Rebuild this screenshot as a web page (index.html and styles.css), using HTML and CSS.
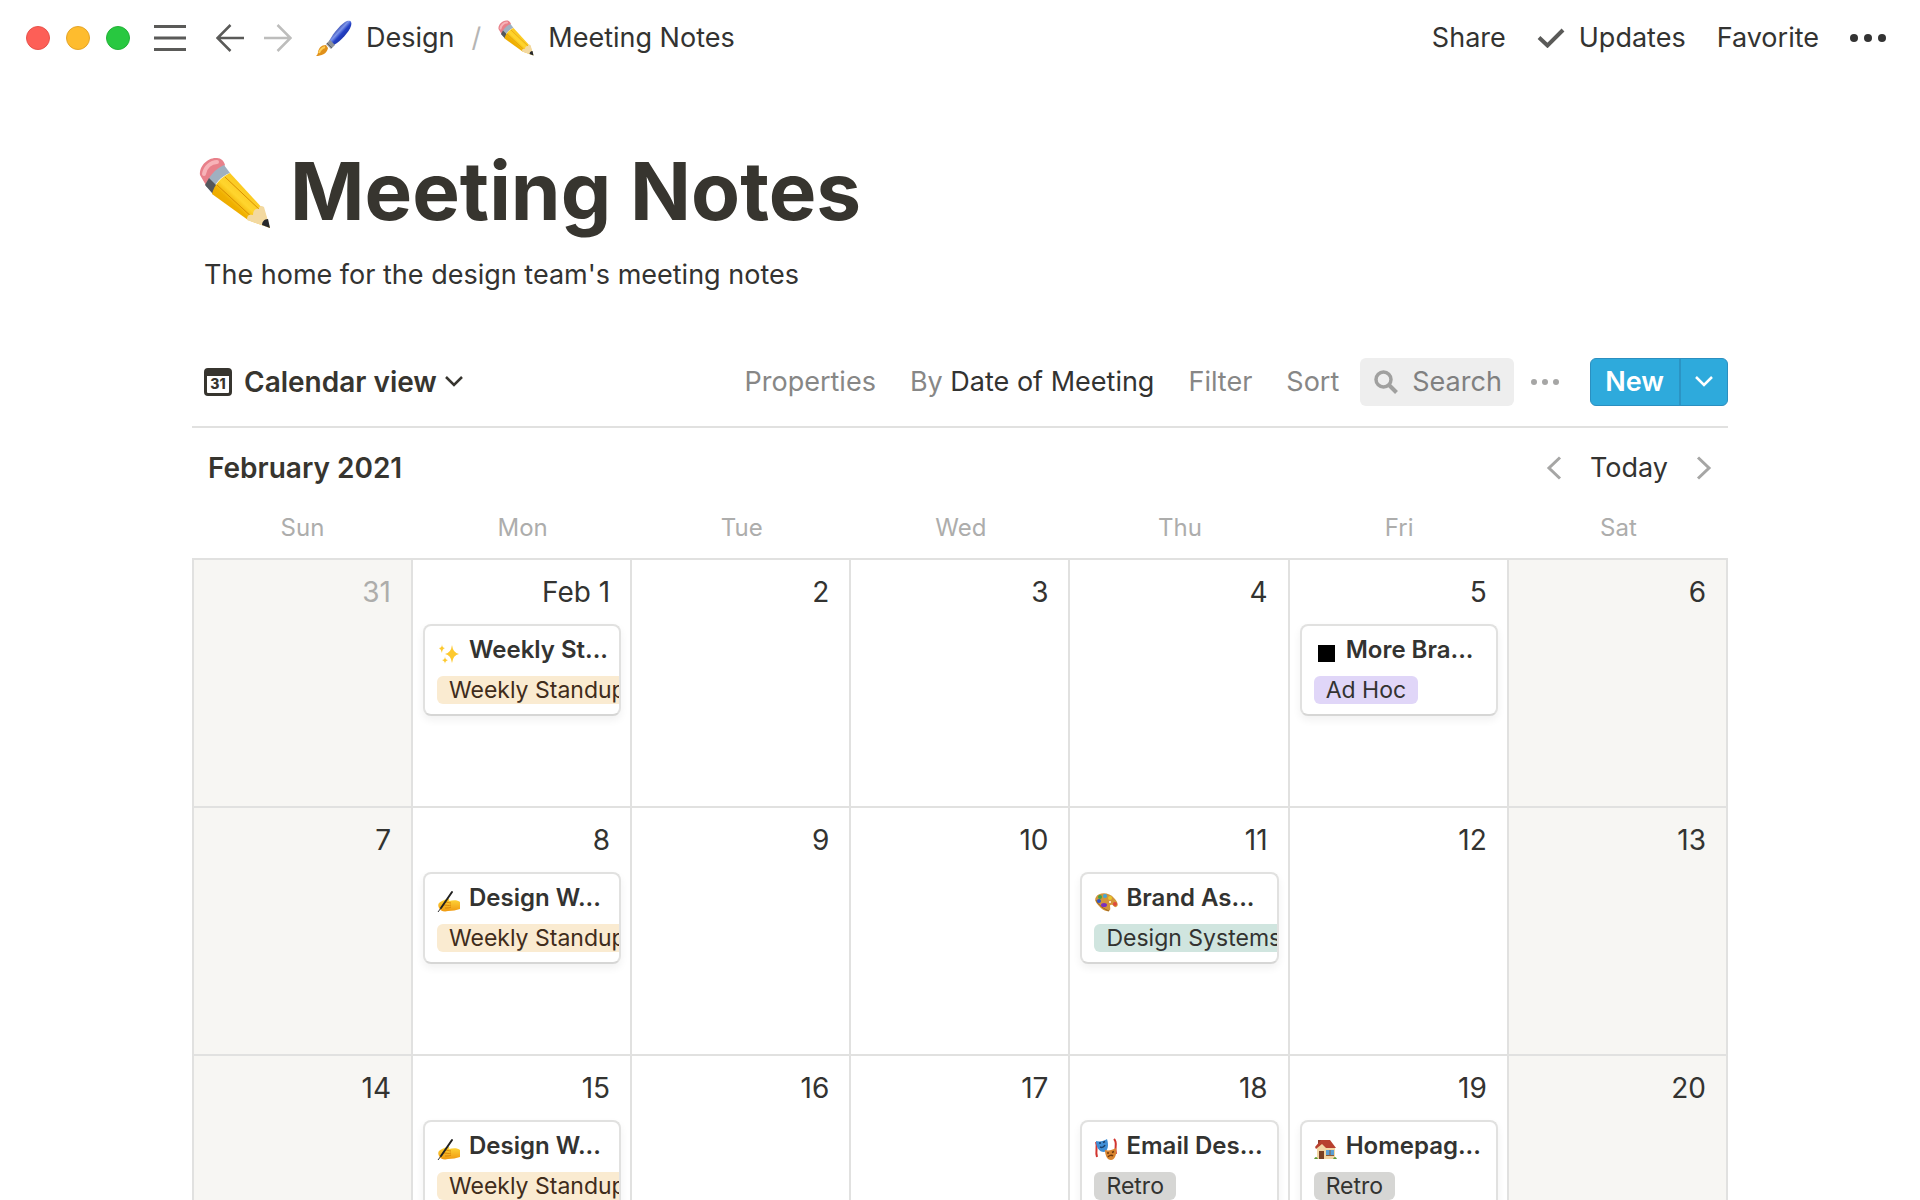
FILE: index.html
```html
<!DOCTYPE html>
<html lang="en">
<head>
    <meta charset="UTF-8">
    <meta name="viewport" content="width=device-width, initial-scale=1.0">
    <title>Meeting Notes</title>
    <link rel="stylesheet" href="styles.css">
</head>
<body>
    <!-- Shared icons -->
    <svg class="sprite" aria-hidden="true">
        <defs>
            <linearGradient id="wood" x1="0" y1="1" x2="1" y2="0">
                <stop offset="0" stop-color="#e09400"/>
                <stop offset="0.4" stop-color="#f0b000"/>
                <stop offset="0.5" stop-color="#ffd52e"/>
                <stop offset="1" stop-color="#f0ac00"/>
            </linearGradient>
            <linearGradient id="handle" x1="0" y1="0" x2="1" y2="1">
                <stop offset="0.3" stop-color="#22349c"/>
                <stop offset="0.45" stop-color="#7d95ea"/>
                <stop offset="0.55" stop-color="#2340c4"/>
                <stop offset="1" stop-color="#101a70"/>
            </linearGradient>
            <linearGradient id="skin" x1="0" y1="0" x2="0" y2="1">
                <stop offset="0" stop-color="#ffd93b"/>
                <stop offset="1" stop-color="#f09a12"/>
            </linearGradient>
        </defs>
        <symbol id="pencil" viewBox="0 0 72 72">
            <path d="M1 18C0 9 9 0 18 1c4 0 7 3 8 7L8 30z" fill="#e8808a"/>
            <path d="M5 17C6 10 12 5 18 5" stroke="#f7b3b8" stroke-width="4" fill="none" stroke-linecap="round"/>
            <path d="M7 29C9 20 16 12 25 8l6 8c-9 3-16 11-18 20z" fill="#9fb0c0"/>
            <path d="M6 28l4-7 8 8-4 8z" fill="#55575c"/>
            <path d="M13 37C15 28 22 20 31 16l34 37 6 18-22-8z" fill="url(#wood)"/>
            <path d="M18 28l37 34M26 20l36 34" stroke="#d98e00" stroke-width="1" fill="none"/>
            <path d="M48 63c0-5 2-6 6-5 0-5 3-7 6-6 0-3 2-4 5-2l6 21z" fill="#f3d9a0"/>
            <path d="M71 71l-8-3c0-3 2-6 6-6z" fill="#26282b"/>
        </symbol>
        <symbol id="hand" viewBox="0 0 24 24">
            <path d="M2 14c2-2 5-3 8-4 2-1 3 0 2 2 4-1 9-1 11 1v7c-4 1-7 2-12 2-4 1-8 0-9-3-1-2-1-4 0-5z" fill="url(#skin)"/>
            <path d="M8 13c3 0 4 1 6 1M7 16c3 0 5 1 7 0M8 19c3 0 4 0 6-1" stroke="#d98508" stroke-width="1" fill="none"/>
            <path d="M15 3L4 19" stroke="#222" stroke-width="2" stroke-linecap="round"/>
            <path d="M4 19L1 23" stroke="#333" stroke-width="1"/>
        </symbol>
    </svg>

    <header class="topbar">
        <div class="window-dots">
            <span class="dot red"></span>
            <span class="dot yellow"></span>
            <span class="dot green"></span>
        </div>
        <button class="icon-btn menu" aria-label="Menu">
            <svg width="32" height="28" viewBox="0 0 32 28"><path d="M0 2.500h32M0 14h32M0 25.500h32" stroke="#5a5a58" stroke-width="3"/></svg>
        </button>
        <div class="history">
            <button class="icon-btn" aria-label="Back">
                <svg width="28" height="28" viewBox="0 0 28 28"><path d="M28 14H2M14.500 1L1.500 14l13 13" stroke="#5a5a58" stroke-width="2.500" fill="none"/></svg>
            </button>
            <button class="icon-btn" aria-label="Forward">
                <svg width="28" height="28" viewBox="0 0 28 28"><path d="M0 14h26M13.500 1l13 13-13 13" stroke="#bdbdbc" stroke-width="2.500" fill="none"/></svg>
            </button>
        </div>
        <nav class="breadcrumb">
            <a href="#">
                <svg width="36" height="36" viewBox="0 0 36 36">
                    <path d="M13 21C18 12 26 3 31 1c4-1 5 1 4 5-2 6-10 15-17 19z" fill="url(#handle)"/>
                    <path d="M10 24l4-4 5 5-4 4z" fill="#8d9299"/>
                    <path d="M11 23l5 5" stroke="#5d6168" stroke-width="1"/>
                    <path d="M10 25c-5 0-7 3-8 7 0 2-1 3-2 4 5 0 11-2 12-8z" fill="#e0901a"/>
                    <path d="M3 33c1-3 3-5 6-6" stroke="#ffce55" stroke-width="2" fill="none"/>
                </svg>
                Design
            </a>
            <span class="slash">/</span>
            <a href="#">
                <svg width="36" height="36"><use href="#pencil"/></svg>
                Meeting Notes
            </a>
        </nav>
        <div class="actions">
            <button>Share</button>
            <button class="updates">
                <svg width="28" height="20" viewBox="0 0 28 20"><path d="M2 9.500l8.500 8L26 2" stroke="#5a5a58" stroke-width="4" fill="none"/></svg>
                Updates
            </button>
            <button>Favorite</button>
            <button class="icon-btn" aria-label="More">
                <svg width="36" height="10" viewBox="0 0 36 10" fill="#333"><circle cx="4" cy="5" r="4"/><circle cx="18" cy="5" r="4"/><circle cx="32" cy="5" r="4"/></svg>
            </button>
        </div>
    </header>

    <main class="page">
        <h1 class="title">
            <svg width="72" height="72"><use href="#pencil"/></svg>
            Meeting Notes
        </h1>
        <p class="description">The home for the design team's meeting notes</p>

        <div class="toolbar">
            <button class="view">
                <svg class="view-icon" width="28" height="28" viewBox="0 0 28 28">
                    <path fill-rule="evenodd" d="M4 0h20a4 4 0 0 1 4 4v20a4 4 0 0 1-4 4H4a4 4 0 0 1-4-4V4a4 4 0 0 1 4-4zM3 8v16q0 1 1 1h20q1 0 1-1V8z" fill="#37352f"/>
                    <text x="14" y="21" class="day-glyph">31</text>
                </svg>
                Calendar view
                <svg width="18" height="12" viewBox="0 0 18 12"><path d="M1 1l8 8 8-8" stroke="#37352f" stroke-width="2.500" fill="none"/></svg>
            </button>
            <div class="tools">
                <button>Properties</button>
                <button>By <span class="strong">Date of Meeting</span></button>
                <button>Filter</button>
                <button>Sort</button>
                <label class="search">
                    <svg width="24" height="24" viewBox="0 0 24 24"><circle cx="9.500" cy="9.500" r="7.500" stroke="#a0a09f" stroke-width="3.500" fill="none"/><path d="M15 15l7.500 7.500" stroke="#a0a09f" stroke-width="4"/></svg>
                    <input type="text" placeholder="Search" aria-label="Search">
                </label>
                <button class="more" aria-label="View options">
                    <svg width="28" height="8" viewBox="0 0 28 8" fill="#a6a6a5"><circle cx="3" cy="4" r="3"/><circle cx="14" cy="4" r="3"/><circle cx="25" cy="4" r="3"/></svg>
                </button>
                <div class="new">
                    <button>New</button>
                    <button class="drop" aria-label="Templates">
                        <svg width="18" height="12" viewBox="0 0 18 12"><path d="M1 1l8 8 8-8" stroke="#fff" stroke-width="2.500" fill="none"/></svg>
                    </button>
                </div>
            </div>
        </div>

        <div class="month">
            <h2>February 2021</h2>
            <div class="month-nav">
                <button aria-label="Previous month">
                    <svg width="16" height="24" viewBox="0 0 16 24"><path d="M14 1.500L3 12l11 10.500" stroke="#a6a6a5" stroke-width="3" fill="none"/></svg>
                </button>
                <button>Today</button>
                <button aria-label="Next month">
                    <svg width="16" height="24" viewBox="0 0 16 24"><path d="M2 1.500L13 12 2 22.500" stroke="#a6a6a5" stroke-width="3" fill="none"/></svg>
                </button>
            </div>
        </div>

        <table class="calendar">
            <thead>
                <tr><th>Sun</th><th>Mon</th><th>Tue</th><th>Wed</th><th>Thu</th><th>Fri</th><th>Sat</th></tr>
            </thead>
            <tbody>
                <tr>
                    <td class="weekend"><div class="date muted">31</div></td>
                    <td>
                        <div class="date">Feb 1</div>
                        <a class="card" href="#">
                            <span class="card-title">
                                <svg width="24" height="24" viewBox="0 0 24 24" fill="#fdc92f">
                                    <path d="M15 4q1 8 7 9-6 1-7 9-1-8-7-9 6-1 7-9zM5 3q0 4 3 4-3 1-3 5-1-4-3-5 3 0 3-4zM8 15q0 4 3 4-3 1-3 4 0-3-3-4 3 0 3-4z"/>
                                </svg>
                                Weekly St...
                            </span>
                            <span class="tag yellow">Weekly Standup</span>
                        </a>
                    </td>
                    <td><div class="date">2</div></td>
                    <td><div class="date">3</div></td>
                    <td><div class="date">4</div></td>
                    <td>
                        <div class="date">5</div>
                        <a class="card" href="#">
                            <span class="card-title">
                                <svg width="24" height="24" viewBox="0 0 24 24"><path d="M4 4h17v17H4z" fill="#000"/></svg>
                                More Bra...
                            </span>
                            <span class="tag purple">Ad Hoc</span>
                        </a>
                    </td>
                    <td class="weekend"><div class="date">6</div></td>
                </tr>
                <tr>
                    <td class="weekend"><div class="date">7</div></td>
                    <td>
                        <div class="date">8</div>
                        <a class="card" href="#">
                            <span class="card-title">
                                <svg width="24" height="24"><use href="#hand"/></svg>
                                Design W...
                            </span>
                            <span class="tag yellow">Weekly Standup</span>
                        </a>
                    </td>
                    <td><div class="date">9</div></td>
                    <td><div class="date">10</div></td>
                    <td>
                        <div class="date">11</div>
                        <a class="card" href="#">
                            <span class="card-title">
                                <svg width="24" height="24" viewBox="0 0 24 24">
                                    <path d="M2 8c3-5 13-5 18 1 4 4 5 8 2 9-2 1-3-3-5-2-2 0 0 3-1 5-2 3-8 0-11-4-3-3-5-6-3-9z" fill="#d3953a"/>
                                    <path d="M2 11c2 5 8 9 13 11" stroke="#9a6420" stroke-width="1" fill="none"/>
                                    <circle cx="6" cy="8" r="2" fill="#3fa34b"/>
                                    <circle cx="11" cy="7" r="2" fill="#42a5d8"/>
                                    <circle cx="16" cy="9" r="2" fill="#e8c62c"/>
                                    <ellipse cx="10" cy="16" rx="3" ry="2" fill="#7a2fc0"/>
                                    <circle cx="5" cy="12" r="2" fill="#3056c9"/>
                                    <circle cx="21" cy="15" r="2" fill="#e0483c"/>
                                    <circle cx="16" cy="13" r="1" fill="#fff"/>
                                </svg>
                                Brand As...
                            </span>
                            <span class="tag green">Design Systems</span>
                        </a>
                    </td>
                    <td><div class="date">12</div></td>
                    <td class="weekend"><div class="date">13</div></td>
                </tr>
                <tr>
                    <td class="weekend"><div class="date">14</div></td>
                    <td>
                        <div class="date">15</div>
                        <a class="card" href="#">
                            <span class="card-title">
                                <svg width="24" height="24"><use href="#hand"/></svg>
                                Design W...
                            </span>
                            <span class="tag yellow">Weekly Standup</span>
                        </a>
                    </td>
                    <td><div class="date">16</div></td>
                    <td><div class="date">17</div></td>
                    <td>
                        <div class="date">18</div>
                        <a class="card" href="#">
                            <span class="card-title">
                                <svg width="24" height="24" viewBox="0 0 24 24">
                                    <path d="M2 5c2 5-1 9 1 15M20 2c4 4 0 8 2 15" stroke="#d1342f" stroke-width="2" fill="none"/>
                                    <path d="M2 4c4 1 8 0 11-2 2 6 1 12-3 13-5 0-8-5-8-11z" fill="#3f8fd6"/>
                                    <path d="M5 6l2 0M9 5.500l2-1M6 10c2 1 4 0 5-2" stroke="#17406e" stroke-width="1.500" fill="none"/>
                                    <path d="M11 13c4 1 7 0 11-2 1 6-1 12-5 12-4 0-6-5-6-10z" fill="#d98530"/>
                                    <path d="M13 16l2 0M18 15.500l2-1M14 20c1-2 4-2 5-1" stroke="#6e3a0f" stroke-width="1.500" fill="none"/>
                                </svg>
                                Email Des...
                            </span>
                            <span class="tag gray">Retro</span>
                        </a>
                    </td>
                    <td>
                        <div class="date">19</div>
                        <a class="card" href="#">
                            <span class="card-title">
                                <svg width="24" height="24" viewBox="0 0 24 24">
                                    <path d="M4 3h3v6H4z" fill="#8c3b2e"/>
                                    <path d="M3 11l5-5 13 5v11H3z" fill="#f3d6a4"/>
                                    <path d="M1 10l6-7h9l6 8H12L8 7l-6 5z" fill="#b8402f"/>
                                    <path d="M5 14h5v8H5z" fill="#7a4024"/>
                                    <path d="M12 13h8v5h-8z" fill="#5a9fd4"/>
                                    <path d="M16 13v5M12 18.500h8" stroke="#8c5a36" stroke-width="1"/>
                                    <path d="M0 22q2-4 4 0zM19 22q2-4 4 0z" fill="#5d9a35"/>
                                </svg>
                                Homepag...
                            </span>
                            <span class="tag gray">Retro</span>
                        </a>
                    </td>
                    <td class="weekend"><div class="date">20</div></td>
                </tr>
            </tbody>
        </table>
    </main>
</body>
</html>
```
FILE: styles.css
```css
* {
    box-sizing: border-box;
}
body {
    margin: 0;
    height: 100vh;
    overflow: hidden;
    background: #fff;
    color: #333331;
    font-family: Inter, "Liberation Sans", sans-serif;
    font-size: 27px;
    line-height: 40px;
}
button {
    padding: 0;
    border: 0;
    background: none;
    color: inherit;
    font: inherit;
    white-space: nowrap;
    cursor: pointer;
}
a {
    color: inherit;
    text-decoration: none;
}
svg {
    display: block;
    flex: none;
}
.sprite {
    position: absolute;
    width: 0;
    height: 0;
}

/* Top bar */
.topbar {
    display: flex;
    align-items: center;
    height: 76px;
    padding: 0 34px 0 26px;
}
.window-dots {
    display: flex;
    gap: 16px;
}
.dot {
    width: 24px;
    height: 24px;
    border-radius: 50%;
}
.dot.red {
    background: #fd5f57;
    border: 1px solid #e8524b;
}
.dot.yellow {
    background: #febc2e;
    border: 1px solid #e5a528;
}
.dot.green {
    background: #28c840;
    border: 1px solid #22b237;
}
.menu {
    margin-left: 24px;
}
.history {
    display: flex;
    gap: 20px;
    margin: 0 24px 0 30px;
}
.breadcrumb,
.breadcrumb a {
    display: flex;
    align-items: center;
    gap: 14px;
}
.breadcrumb {
    gap: 17px;
}
.slash {
    color: #b5b5b4;
}
.actions {
    display: flex;
    align-items: center;
    gap: 31px;
    margin-left: auto;
}
.updates {
    display: flex;
    align-items: center;
    gap: 14px;
}

/* Page */
.page {
    padding: 67px 10% 0;
}
.title {
    display: flex;
    align-items: center;
    gap: 19px;
    margin: 0;
    padding-left: 7px;
    color: #37352f;
    font-size: 80px;
    font-weight: 700;
    line-height: 96px;
}
.title svg {
    margin-top: 4px;
}
.description {
    margin: 16px 0 63px;
    padding-left: 12px;
}

/* Toolbar */
.toolbar {
    display: flex;
    justify-content: space-between;
    padding-bottom: 20px;
    border-bottom: 2px solid #e1e1e0;
}
.view {
    display: flex;
    align-items: center;
    gap: 8px;
    padding-left: 12px;
    color: #37352f;
    font-size: 28px;
    font-weight: 600;
}
.view-icon {
    margin-right: 4px;
}
.day-glyph {
    fill: #37352f;
    font-size: 14px;
    font-weight: 800;
    text-anchor: middle;
}
.tools {
    display: flex;
    height: 48px;
    color: #878786;
}
.tools > button {
    padding: 0 17px;
}
.strong {
    color: #333331;
}
.search {
    display: flex;
    align-items: center;
    gap: 14px;
    margin-left: 4px;
    padding: 0 10px 0 14px;
    border-radius: 6px;
    background: #eeeeee;
}
.search input {
    width: 92px;
    padding: 0;
    border: 0;
    outline: 0;
    background: none;
    font: inherit;
}
.search input::placeholder {
    color: #808080;
    opacity: 1;
}
.new {
    display: flex;
    margin-left: 14px;
    border: 1px solid #2b8fc0;
    border-radius: 6px;
    background: #2eaadc;
    color: #fff;
    font-weight: 600;
}
.new button {
    padding: 0 15px 0 14px;
}
.new .drop {
    padding: 0 14px;
    border-left: 2px solid #2b94c4;
}

/* Month header */
.month {
    display: flex;
    align-items: center;
    justify-content: space-between;
    height: 80px;
    padding: 0 16px;
}
.month h2 {
    margin: 0;
    color: #37352f;
    font-size: 28px;
    font-weight: 600;
}
.month-nav {
    display: flex;
    align-items: center;
    gap: 28px;
}

/* Calendar */
.calendar {
    width: 100%;
    border-spacing: 0;
    table-layout: fixed;
}
.calendar th {
    height: 52px;
    padding: 0 0 10px;
    border-bottom: 2px solid #e1e1e0;
    color: #adadac;
    font-size: 24px;
    font-weight: 400;
    line-height: 32px;
}
.calendar th:first-child {
    width: 221px;
}
.calendar td {
    height: 248px;
    padding: 12px 9px 0 10px;
    border-right: 2px solid #e1e1e0;
    border-bottom: 2px solid #e1e1e0;
    vertical-align: top;
}
.calendar td:first-child {
    border-left: 2px solid #e1e1e0;
}
.calendar .weekend {
    background: #f7f6f3;
}
.date {
    padding-right: 11px;
    font-size: 28px;
    text-align: right;
}
.date.muted {
    color: #adadab;
}
.card {
    display: block;
    margin-top: 12px;
    padding: 7px 12px 10px;
    overflow: hidden;
    border: 2px solid #e1e1e0;
    border-bottom-color: #d6d6d5;
    border-radius: 8px;
    background: #fff;
    box-shadow: 0 4px 8px rgba(15, 15, 15, 0.06);
    font-size: 24px;
    white-space: nowrap;
}
.card-title {
    display: flex;
    align-items: center;
    gap: 8px;
    margin-bottom: 9px;
    font-weight: 600;
    line-height: 34px;
}
.card-title svg {
    margin-top: 6px;
}
.tag {
    display: block;
    width: max-content;
    padding: 0 12px;
    border-radius: 6px;
    font-size: 23px;
    line-height: 28px;
}
.tag.yellow {
    background: #faebd1;
    color: #402c1b;
}
.tag.purple {
    background: #e0d6f8;
}
.tag.green {
    background: #d0e5df;
}
.tag.gray {
    background: #d6d6d4;
}
```
